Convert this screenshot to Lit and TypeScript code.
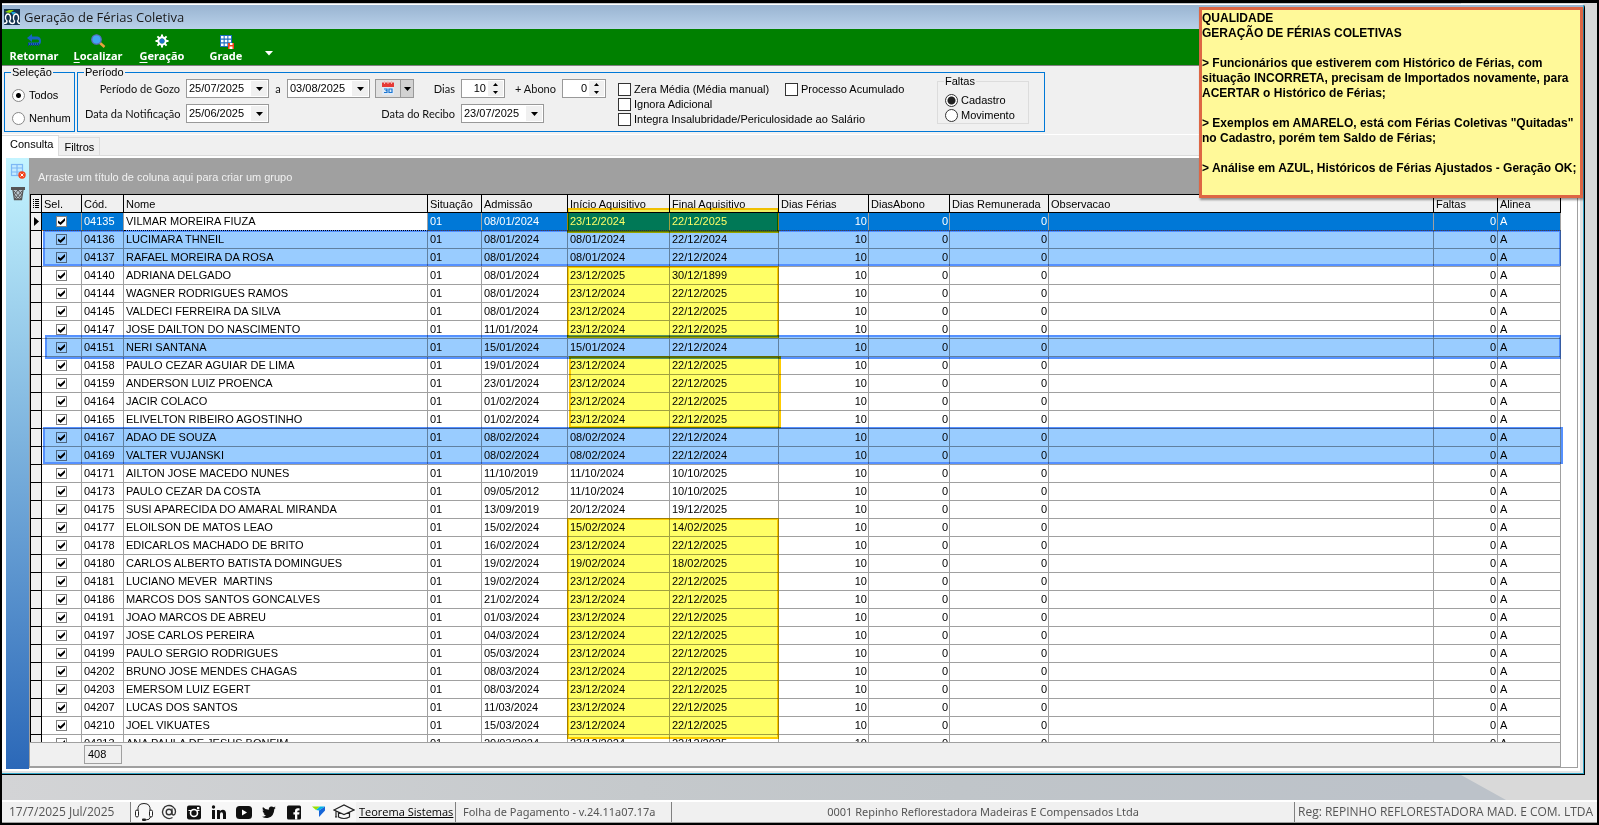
import { LitElement, html, css, svg, nothing } from "lit";
import { customElement, state } from "lit/decorators.js";
import { classMap } from "lit/directives/class-map.js";

interface Row {
  cod: string;
  nome: string;
  admissao: string;
  inicio: string;
  final: string;
}

const r = (cod: string, nome: string, admissao: string, inicio: string, final: string): Row => ({
  cod, nome, admissao, inicio, final,
});

const ROWS: Row[] = [
  r("04135", "VILMAR MOREIRA FIUZA", "08/01/2024", "23/12/2024", "22/12/2025"),
  r("04136", "LUCIMARA THNEIL", "08/01/2024", "08/01/2024", "22/12/2024"),
  r("04137", "RAFAEL MOREIRA DA ROSA", "08/01/2024", "08/01/2024", "22/12/2024"),
  r("04140", "ADRIANA DELGADO", "08/01/2024", "23/12/2025", "30/12/1899"),
  r("04144", "WAGNER RODRIGUES RAMOS", "08/01/2024", "23/12/2024", "22/12/2025"),
  r("04145", "VALDECI FERREIRA DA SILVA", "08/01/2024", "23/12/2024", "22/12/2025"),
  r("04147", "JOSE DAILTON DO NASCIMENTO", "11/01/2024", "23/12/2024", "22/12/2025"),
  r("04151", "NERI SANTANA", "15/01/2024", "15/01/2024", "22/12/2024"),
  r("04158", "PAULO CEZAR AGUIAR DE LIMA", "19/01/2024", "23/12/2024", "22/12/2025"),
  r("04159", "ANDERSON LUIZ PROENCA", "23/01/2024", "23/12/2024", "22/12/2025"),
  r("04164", "JACIR COLACO", "01/02/2024", "23/12/2024", "22/12/2025"),
  r("04165", "ELIVELTON RIBEIRO AGOSTINHO", "01/02/2024", "23/12/2024", "22/12/2025"),
  r("04167", "ADAO DE SOUZA", "08/02/2024", "08/02/2024", "22/12/2024"),
  r("04169", "VALTER VUJANSKI", "08/02/2024", "08/02/2024", "22/12/2024"),
  r("04171", "AILTON JOSE MACEDO NUNES", "11/10/2019", "11/10/2024", "10/10/2025"),
  r("04173", "PAULO CEZAR DA COSTA", "09/05/2012", "11/10/2024", "10/10/2025"),
  r("04175", "SUSI APARECIDA DO AMARAL MIRANDA", "13/09/2019", "20/12/2024", "19/12/2025"),
  r("04177", "ELOILSON DE MATOS LEAO", "15/02/2024", "15/02/2024", "14/02/2025"),
  r("04178", "EDICARLOS MACHADO DE BRITO", "16/02/2024", "23/12/2024", "22/12/2025"),
  r("04180", "CARLOS ALBERTO BATISTA DOMINGUES", "19/02/2024", "19/02/2024", "18/02/2025"),
  r("04181", "LUCIANO MEVER  MARTINS", "19/02/2024", "23/12/2024", "22/12/2025"),
  r("04186", "MARCOS DOS SANTOS GONCALVES", "21/02/2024", "23/12/2024", "22/12/2025"),
  r("04191", "JOAO MARCOS DE ABREU", "01/03/2024", "23/12/2024", "22/12/2025"),
  r("04197", "JOSE CARLOS PEREIRA", "04/03/2024", "23/12/2024", "22/12/2025"),
  r("04199", "PAULO SERGIO RODRIGUES", "05/03/2024", "23/12/2024", "22/12/2025"),
  r("04202", "BRUNO JOSE MENDES CHAGAS", "08/03/2024", "23/12/2024", "22/12/2025"),
  r("04203", "EMERSOM LUIZ EGERT", "08/03/2024", "23/12/2024", "22/12/2025"),
  r("04207", "LUCAS DOS SANTOS", "11/03/2024", "23/12/2024", "22/12/2025"),
  r("04210", "JOEL VIKUATES", "15/03/2024", "23/12/2024", "22/12/2025"),
  r("04213", "ANA PAULA DE JESUS BONFIM", "20/03/2024", "23/12/2024", "22/12/2025"),
];

const base = css`
  :host, * { box-sizing: border-box; }
  button, input { font: inherit; color: inherit; margin: 0; padding: 0; border: 0; background: none; }
  svg { display: block; }
`;

@customElement("tool-bar")
export class ToolBar extends LitElement {
  static styles = [base, css`
    :host {
      display: flex; align-items: stretch; height: 37px; flex: none;
      background: #008000; border-bottom: 1px solid #808080;
      font: bold 11px/14px "Noto Sans", sans-serif; color: #fff;
    }
    .tool { width: 64px; display: flex; flex-direction: column; align-items: center; justify-content: flex-end; padding-bottom: 2px; }
    .more { width: 22px; display: flex; align-items: center; justify-content: center; padding-top: 12px; }
    u { text-underline-offset: 2px; }
  `];

  render() {
    return html`
      <button class="tool">
        <svg width="18" height="16" viewBox="0 0 18 16" aria-hidden="true">
          <path d="M7 1 2 5l5 4V6.500h5.500q1.500 0 1.500 1.500t-1.500 1.500H3V12h9.500Q16 12 16 8t-3.500-4.500H7z" fill="#1565c0"/>
          <path d="M3.500 10v3M5.500 10v3M7.500 10v3M9.500 10v3M11.500 10v3M13.500 10v3" stroke="#0d3f8a" stroke-width="1"/>
        </svg>
        <span>Retornar</span>
      </button>
      <button class="tool">
        <svg width="16" height="16" viewBox="0 0 16 16" aria-hidden="true">
          <path d="M9.500 9.500l5 4.500" stroke="#e8a33d" stroke-width="2.500"/>
          <circle cx="6.500" cy="6.500" r="4.700" fill="#42a5f5" stroke="#5c6bc0" stroke-width="1.300"/>
        </svg>
        <span><u>L</u>ocalizar</span>
      </button>
      <button class="tool">
        <svg width="16" height="16" viewBox="0 0 16 16" aria-hidden="true">
          <circle cx="8" cy="8" r="3.600" fill="none" stroke="#fff" stroke-width="2.200"/>
          <path d="M8 1.500v3M8 11.500v3M1.500 8h3M11.500 8h3M3.400 3.400l2 2M10.600 10.600l2 2M12.600 3.400l-2 2M5.400 10.600l-2 2" stroke="#fff" stroke-width="2"/>
          <circle cx="8" cy="8" r="2.500" fill="#1e74c8"/>
        </svg>
        <span><u>G</u>eração</span>
      </button>
      <button class="tool">
        <svg width="16" height="16" viewBox="0 0 16 16" aria-hidden="true">
          <rect x="2" y="2" width="12" height="12" fill="#1e6fc0"/>
          <path d="M3 3h2.600v2.600H3zM6.700 3h2.600v2.600H6.700zM10.400 3H13v2.600h-2.600zM3 6.700h2.600v2.600H3zM6.700 6.700h2.600v2.600H6.700zM10.400 6.700H13v2.600h-2.600zM3 10.400h2.600V13H3zM6.700 10.400h2.600V13H6.700z" fill="#fff"/>
          <path d="M10 10h6v6h-6z" fill="#f4431c"/><path d="M12 10h2.500v2H12zM11.500 13.500h3V16h-3z" fill="#fff"/>
        </svg>
        <span>Grade</span>
      </button>
      <button class="more" aria-label="Mais opções">
        <svg width="8" height="5" viewBox="0 0 8 5"><path d="M0 0h8L4 4.500z" fill="#fff"/></svg>
      </button>
    `;
  }
}

@customElement("filter-panel")
export class FilterPanel extends LitElement {
  static styles = [base, css`
    :host { display: flex; align-items: stretch; gap: 2px; padding: 0 2px 2px; font: 11px/13px "Liberation Sans", Arial, sans-serif; color: #000; flex: none; }
    fieldset { margin: 0; padding: 0; border: 1px solid #0078d7; min-width: 0; }
    legend { margin-left: 6px; padding: 0 1px; }
    .sel { width: 71px; }
    .sel .opts { display: flex; flex-direction: column; gap: 9px; padding: 9px 0 0 7px; }
    .opt { display: flex; align-items: center; gap: 3px; white-space: nowrap; }
    .sel .opt { gap: 4px; height: 14px; }
    input[type="radio"] { appearance: none; width: 13px; height: 13px; border-radius: 50%; border: 1px solid #333; background: #fff; flex: none; }
    input[type="radio"]:checked { background: radial-gradient(circle, #222 0 3.500px, #fff 4.500px); }
    .sel input[type="radio"] { border-color: #888; }
    .sel input[type="radio"]:checked { background: radial-gradient(circle, #000 0 2px, #fff 3px); }
    input[type="checkbox"] { appearance: none; width: 13px; height: 13px; border: 1px solid #333; background: #fff; flex: none; }
    input[type="checkbox"]:checked { background: #333; }
    .per .body { display: flex; align-items: flex-start; padding: 0 15px 5px 7px; }
    .form { display: grid; grid-template-columns: 101px 83px 18px 83px 5px 39px 47px 44px 57px 44px; grid-template-rows: 19px 19px; row-gap: 6px; }
    .lbl { font: 11px/19px Lato, sans-serif; text-align: right; padding-right: 6px; color: #111; white-space: nowrap; }
    .mid { text-align: center; padding: 0; }
    .box { display: flex; background: #fff; border: 1px solid #999; height: 19px; }
    .box input { flex: 1; width: 0; min-width: 0; padding-left: 2px; }
    .num input { text-align: right; padding-right: 2px; }
    .drop { width: 16px; margin: 1px; background: #f0f0f0; display: grid; place-items: center; }
    .spin { width: 15px; display: flex; flex-direction: column; margin: 1px 1px 1px 0; }
    .spin button { flex: 1; display: grid; place-items: center; background: #f0f0f0; }
    .wide { grid-column: 8 / span 2; width: 83px; }
    .rec { grid-column: 4 / span 4; }
    .cal { display: flex; border: 1px solid #999; background: #e1e1e1; height: 19px; }
    .cal button:first-child { width: 25px; display: grid; place-items: center; border-right: 1px solid #999; }
    .cal button:last-child { flex: 1; display: grid; place-items: center; background: #d2d2d2; }
    .checks { display: grid; grid-template-columns: 167px 120px; row-gap: 1px; margin: 3px 0 0 12px; align-content: start; }
    .checks .opt { height: 14px; }
    .c1 { grid-column: 1; }
    .span { grid-column: 1 / span 2; }
    .fal { border-color: #dcdcdc; margin-left: 32px; width: 92px; height: 49px; margin-top: -4px; }
    .fal .opts { display: flex; flex-direction: column; gap: 1px; padding: 5px 0 0 7px; }
    .fal .opt { height: 14px; }
  `];

  @state() private selecao = "Todos";

  private caret = () => svg`<svg width="7" height="4" viewBox="0 0 7 4"><path d="M0 0h7L3.500 4z" fill="#000"/></svg>`;
  private up = () => svg`<svg width="5" height="3" viewBox="0 0 5 3"><path d="M0 3h5L2.500 0z" fill="#000"/></svg>`;
  private down = () => svg`<svg width="5" height="3" viewBox="0 0 5 3"><path d="M0 0h5L2.500 3z" fill="#000"/></svg>`;

  private date(id: string, value: string, label: string, wide = false) {
    return html`<div class=${classMap({ box: true, wide })}>
      <input id=${id} type="text" .value=${value} aria-label=${label}>
      <button class="drop" aria-label="Abrir calendário">${this.caret()}</button>
    </div>`;
  }

  private num(id: string, value: string) {
    return html`<div class="box num">
      <input id=${id} type="text" inputmode="numeric" .value=${value}>
      <div class="spin">
        <button aria-label="Aumentar">${this.up()}</button>
        <button aria-label="Diminuir">${this.down()}</button>
      </div>
    </div>`;
  }

  render() {
    return html`
      <fieldset class="sel">
        <legend>Seleção</legend>
        <div class="opts">
          ${["Todos", "Nenhum"].map((o) => html`<label class="opt">
            <input type="radio" name="sel" .checked=${this.selecao === o} @change=${() => (this.selecao = o)}>${o}</label>`)}
        </div>
      </fieldset>
      <fieldset class="per">
        <legend>Período</legend>
        <div class="body">
          <div class="form">
            <label class="lbl" for="gozo">Período de Gozo</label>
            ${this.date("gozo", "25/07/2025", "Início do período de gozo")}
            <label class="lbl mid" for="gozofim">a</label>
            ${this.date("gozofim", "03/08/2025", "Fim do período de gozo")}
            <span></span>
            <div class="cal">
              <button aria-label="Calendário">
                <svg width="14" height="15" viewBox="0 0 14 15">
                  <rect x="1" y="1" width="12" height="13" fill="#dfe9f5"/>
                  <path d="M1 1.500h12V6H1z" fill="#e53935"/>
                  <path d="M3.500 0v3M7 0v3M10.500 0v3" stroke="#f7b5b0" stroke-width="1"/>
                  <path d="M3 8h3v1.500H4.500M6 9.500v2H3M8 8h3v3.500H8z" fill="none" stroke="#1976d2" stroke-width="1.200"/>
                </svg>
              </button>
              <button aria-label="Opções do calendário">${this.caret()}</button>
            </div>
            <label class="lbl" for="dias">Dias</label>
            ${this.num("dias", "10")}
            <label class="lbl" for="abono">+ Abono</label>
            ${this.num("abono", "0")}
            <label class="lbl" for="notif">Data da Notificação</label>
            ${this.date("notif", "25/06/2025", "Data da Notificação")}
            <span></span>
            <label class="lbl rec" for="recibo">Data do Recibo</label>
            ${this.date("recibo", "23/07/2025", "Data do Recibo", true)}
          </div>
          <div class="checks">
            <label class="opt"><input type="checkbox">Zera Média (Média manual)</label>
            <label class="opt"><input type="checkbox">Processo Acumulado</label>
            <label class="opt c1"><input type="checkbox">Ignora Adicional</label>
            <label class="opt span"><input type="checkbox">Integra Insalubridade/Periculosidade ao Salário</label>
          </div>
          <fieldset class="fal">
            <legend>Faltas</legend>
            <div class="opts">
              <label class="opt"><input type="radio" name="fal" checked>Cadastro</label>
              <label class="opt"><input type="radio" name="fal">Movimento</label>
            </div>
          </fieldset>
        </div>
      </fieldset>
    `;
  }
}

@customElement("vacation-grid")
export class VacationGrid extends LitElement {
  static styles = [base, css`
    :host { display: flex; flex: 1; min-width: 0; min-height: 0; flex-direction: column; position: relative;
      font: 11px/17px "Liberation Sans", Arial, sans-serif; color: #000; }
    .group { height: 36px; flex: none; background: #a0a0a0; color: #f0f0f0; padding: 11px 0 0 9px; }
    .area { flex: 1; min-height: 0; display: flex; flex-direction: column; position: relative; background: #fff;
      border: 1px solid #a0a0a0; border-top: 0; margin-bottom: 1px; padding-right: 16px; }
    .view { flex: 1; min-height: 0; overflow: hidden; }
    table { width: 100%; table-layout: fixed; border-collapse: separate; border-spacing: 0; border-left: 1px solid #000; }
    th, td { height: 18px; padding: 0 2px; white-space: nowrap; overflow: hidden; text-align: left; font-weight: normal;
      border-right: 1px solid #a0a0a0; border-bottom: 1px solid #a0a0a0; }
    th { height: 19px; background: #f0f0f0; border-color: #000; border-top: 1px solid #000; line-height: 16px; }
    th.ind { padding: 0 0 0 1px; }
    td.ind { background: #f0f0f0; border-color: #000; padding: 0; }
    td.name { white-space: pre; }
    td.n { text-align: right; padding-right: 1px; }
    td.c { padding: 0 0 0 14px; }
    .c1 { width: 11px; } .c2 { width: 40px; } .c3 { width: 42px; } .c4 { width: 304px; } .c5 { width: 54px; }
    .c6 { width: 86px; } .c7 { width: 102px; } .c8 { width: 109px; } .c9 { width: 90px; } .c10 { width: 81px; }
    .c11 { width: 99px; } .c13 { width: 64px; } .c14 { width: 63px; }
    tr.cur td:not(.ind) { background: #0078d7; color: #fff; border-bottom: 1px dotted #e08a3c; }
    tr.cur td.name { background: #fff; color: #000; border-bottom: 1px dotted #000; }
    input { appearance: none; display: block; width: 11px; height: 11px; border: 1px solid #808080; background: #fff; position: relative; }
    input:checked::before { content: ""; position: absolute; inset: 1px; background: #000;
      clip-path: polygon(0 35%, 35% 62%, 100% 0, 100% 38%, 38% 100%, 0 72%); }
    .foot { height: 25px; flex: none; background: #f0f0f0; border-top: 1px solid #a0a0a0; border-bottom: 1px solid #a0a0a0; border-right: 1px solid #a0a0a0; padding: 2px 0 0 54px; }
    .count { width: 38px; height: 19px; border: 1px solid #a0a0a0; padding-left: 3px; }
    .mark { position: absolute; mix-blend-mode: multiply; pointer-events: none; }
    .blue { background: #99ccff; border: 2px solid #5591ff; right: 16px; }
    .yellow { background: #ffff66; border: 2px solid #ffcc00; left: 537px; width: 212px; }
    .b1 { left: 13px; top: 36px; height: 36px; }
    .b2 { left: 15px; top: 141px; height: 24px; }
    .b3 { left: 13px; top: 233px; height: 37px; right: 14px; }
    .y1 { top: 14px; height: 25px; }
    .y2 { top: 72px; height: 72px; }
    .y3 { top: 162px; height: 72px; left: 539px; }
    .y4 { top: 324px; height: 221px; }
  `];

  @state() private current = 0;

  render() {
    const heads = ["Sel.", "Cód.", "Nome", "Situação", "Admissão", "Início Aquisitivo", "Final Aquisitivo",
      "Dias Férias", "DiasAbono", "Dias Remunerada", "Observacao", "Faltas", "Alinea"];
    return html`
      <div class="group">Arraste um título de coluna aqui para criar um grupo</div>
      <div class="area">
        <div class="view">
          <table>
            <colgroup>${Array.from({ length: 14 }, (_, i) => html`<col class="c${i + 1}">`)}</colgroup>
            <thead><tr>
              <th class="ind" aria-label="Indicador">
                <svg width="8" height="11" viewBox="0 0 8 11"><path d="M1 1.500h1M3 1.500h4M1 3.500h1M3 3.500h4M1 5.500h1M3 5.500h4M1 7.500h1M3 7.500h4M1 9.500h1M3 9.500h4" stroke="#000"/></svg>
              </th>
              ${heads.map((h) => html`<th>${h}</th>`)}
            </tr></thead>
            <tbody>
              ${ROWS.map((row, i) => html`
                <tr class=${classMap({ cur: i === this.current })} @click=${() => (this.current = i)}>
                  <td class="ind">${i === this.current
                    ? html`<svg width="9" height="9" viewBox="0 0 9 9"><path d="M3 0v9l5-4.500z"/></svg>` : nothing}</td>
                  <td class="c"><input type="checkbox" checked aria-label="Selecionar ${row.nome}"></td>
                  <td>${row.cod}</td><td class="name">${row.nome}</td><td>01</td>
                  <td>${row.admissao}</td><td>${row.inicio}</td><td>${row.final}</td>
                  <td class="n">10</td><td class="n">0</td><td class="n">0</td><td></td><td class="n">0</td><td>A</td>
                </tr>`)}
            </tbody>
          </table>
        </div>
        <div class="foot"><div class="count">408</div></div>
        <div class="mark blue b1"></div>
        <div class="mark blue b2"></div>
        <div class="mark blue b3"></div>
        <div class="mark yellow y1"></div>
        <div class="mark yellow y2"></div>
        <div class="mark yellow y3"></div>
        <div class="mark yellow y4"></div>
      </div>
    `;
  }
}

@customElement("status-bar")
export class StatusBar extends LitElement {
  static styles = [base, css`
    :host { display: flex; align-items: stretch; height: 23px; flex: none; background: #f0f0f0; border-top: 2px solid #fff;
      border-bottom: 1px solid #a0a0a0; font: 11px/20px "Noto Sans", sans-serif; color: #555; white-space: nowrap; overflow: hidden; }
    .cell { border-right: 1px solid #808080; padding-left: 7px; }
    .date { width: 129px; font: 12px/20px "Open Sans", sans-serif; }
    .icons { display: flex; align-items: center; width: 225px; background: #f7f7f7; }
    .icons a { width: 25px; display: grid; place-items: center; }
    .link { width: 100px; padding-left: 3px; }
    .link a { color: #000; font-family: "Open Sans", sans-serif; }
    .app { width: 216px; }
    .firm { flex: 1; text-align: center; padding: 0; min-width: 0; }
    .reg { width: 302px; border: 0; padding-left: 3px; font: 12px/20px "Open Sans", sans-serif; }
  `];

  render() {
    const icon = (label: string, body: unknown) => html`<a href="#" aria-label=${label}>
      <svg width="22" height="20" viewBox="0 0 22 20">${body}</svg></a>`;
    return html`
      <div class="cell date">17/7/2025 Jul/2025</div>
      <nav class="icons">
        ${icon("Suporte", svg`<path d="M5 9Q4 1.500 11 1.500T17 9" fill="none" stroke="#222" stroke-width="1"/><rect x="2.500" y="8" width="3" height="7" rx="1.500" fill="#fff" stroke="#222"/><rect x="16.500" y="8" width="3" height="7" rx="1.500" fill="#fff" stroke="#222"/><path d="M17.500 15q-.500 3-5 3" fill="none" stroke="#222"/><rect x="9" y="16.500" width="4" height="2.500" rx="1" fill="#222"/>`)}
        ${icon("E-mail", svg`<circle cx="11" cy="10" r="2.800" fill="none" stroke="#333" stroke-width="1.400"/><path d="M14 6.500V11q0 2 1.600 2T17.500 9.500A6.500 6.500 0 1 0 14.500 15.500" fill="none" stroke="#333" stroke-width="1.300"/>`)}
        ${icon("Instagram", svg`<rect x="4" y="3.500" width="14" height="14" rx="2" fill="#111"/><circle cx="11" cy="11" r="3.500" fill="none" stroke="#fff" stroke-width="1.600"/><path d="M5.500 8.500h3M13.500 8.500h3" stroke="#fff"/><rect x="14" y="5" width="2.300" height="2.300" fill="#fff"/>`)}
        ${icon("LinkedIn", svg`<path d="M4 8h3v9H4zM9 8h2.800v1.300Q12.700 7.700 14.700 7.700 18 7.700 18 11.500V17h-3v-4.800q0-2-1.500-2T12 12.200V17H9z" fill="#111"/><circle cx="5.500" cy="5" r="1.700" fill="#111"/>`)}
        ${icon("YouTube", svg`<rect x="3" y="4" width="16" height="13" rx="3.500" fill="#111"/><path d="M9 7.500v6l5-3z" fill="#fff"/>`)}
        ${icon("Twitter", svg`<path d="M17.800 5.800l-1.600.500q1-.7 1.200-1.700l-1.800.7q-1-1-2.200-.9-2.900.3-2.600 3.300Q7 7.500 4.900 4.900q-1.200 2.300.800 3.900l-1.200-.3q.100 2 2.200 2.900l-1.200.100q.6 1.600 2.500 2-1.800 1.300-4 1.200 3 1.900 6.500 1.100 5.500-1.500 5.800-8.500z" fill="#111"/>`)}
        ${icon("Facebook", svg`<rect x="4" y="3.500" width="14" height="14" rx="1.500" fill="#111"/><path d="M12 17.500v-5h-1.600v-2.200H12V9q0-2.800 2.800-2.800h1.700v2.200h-1.200q-1 0-1 1v.900h2.200l-.3 2.200h-1.900v5z" fill="#fff"/>`)}
        ${icon("Teorema", svg`<path d="M4 4.500h8L8 8z" fill="#9be000"/><path d="M12 4.500h5l-6 4-3-.500z" fill="#00b4e6"/><path d="M17 4.500v4l-6 6.500V8.500z" fill="#1565d8"/>`)}
        ${icon("Treinamento", svg`<path d="M1 8l10-5 10 5-10 4.500zM5.500 10v5q5.500 3 11 0v-5M3 9v6M2 15h2.200" fill="none" stroke="#222" stroke-width="1.200"/>`)}
      </nav>
      <div class="cell link"><a href="#">Teorema Sistemas</a></div>
      <div class="cell app">Folha de Pagamento - v.24.11a07.17a</div>
      <div class="cell firm">0001 Repinho Reflorestadora Madeiras E Compensados Ltda</div>
      <div class="cell reg">Reg: REPINHO REFLORESTADORA MAD. E COM. LTDA</div>
    `;
  }
}

@customElement("app-root")
export class AppRoot extends LitElement {
  static styles = [base, css`
    :host { display: flex; flex-direction: column; height: 100vh; border: 2px solid #000; border-top-width: 3px; overflow: hidden; }
    .desk { flex: 1; min-height: 0; display: flex; padding: 1px 12px 25px 0; position: relative;
      background: linear-gradient(90deg, #d3d4d6, #c5c9cc 40%, #c0c5c9 60%, #bcc2c9 90%); }
    .desk::before { content: ""; position: absolute; right: 0; bottom: 0; width: 136px; height: 100%;
      background: #d9d9d9; clip-path: polygon(0 0, 100% 0, 100% 100%, 45px 100%, 0 calc(100% - 25px)); }
    .win { flex: 1; min-width: 0; display: flex; flex-direction: column; position: relative; background: #f0f0f0;
      border-top: 1px solid #fff; border-right: 1px solid #000; border-bottom: 1px solid #000; border-radius: 0 4px 0 0; }
    .title { height: 24px; flex: none; display: flex; align-items: center; gap: 4px; padding-left: 2px;
      background: linear-gradient(#99b4d1, #b9d1ea); font: 13px/24px "Open Sans", sans-serif; color: #1a1a1a; }
    .tabs { display: flex; align-items: flex-end; height: 22px; flex: none; border-top: 1px solid #fff;
      font: 11px/13px "Liberation Sans", Arial, sans-serif; }
    .tabs button { border: 1px solid #dcdcdc; border-left: 0; height: 19px; padding: 1px 5px 0; }
    .tabs button.on { background: #fff; height: 21px; border-bottom: 0; padding: 0 5px 4px 8px; }
    .rest { flex: 1; border-bottom: 1px solid #dcdcdc; }
    .page { flex: 1; min-height: 0; display: flex; background: #fff; padding: 2px 2px 2px 4px;
      border-right: 3px solid #e4e4e4; border-bottom: 2px solid #e4e4e4; }
    .edge { flex: 1; min-height: 0; display: flex; flex-direction: column; border-right: 1px solid #33a6c8; border-bottom: 1px solid #33a6c8; }
    .side { width: 23px; flex: none; background: linear-gradient(#c4f4ff, #2b68b8); display: flex; flex-direction: column; align-items: center; gap: 7px; padding-top: 5px; }
    .note { position: absolute; right: 1px; top: 2px; width: 384px; height: 191px; margin: 0; padding-top: 1px; border: 3px solid #dd6644;
      background: #fff999; box-shadow: 1px 2px 2px #0006; color: #000; white-space: pre-line;
      font: bold 12px/15px "Liberation Sans", Arial, sans-serif; }
  `];

  @state() private tab = "Consulta";

  render() {
    return html`
      <div class="desk">
        <main class="win">
          <div class="edge">
            <header class="title">
              <svg width="16" height="16" viewBox="0 0 16 16" aria-hidden="true">
                <rect width="16" height="16" fill="#14324f"/>
                <path d="M1 3l4-2h5L6 4z" fill="#8bd400"/><path d="M7 3h5l-3 3z" fill="#1ba7e0"/>
                <path d="M0 14.500q3 0 3-2.500-2-1.500-1.500-4Q2 5 4 5t2.500 3Q7 10.500 5.500 12q.5 2.500 3 2.500 2 0 2-2.500Q9 10.500 9.500 8 10 5 12 5t2.500 3q.5 2.500-1 4 .5 2.500 2.500 2.500" fill="none" stroke="#fff" stroke-width="1.400"/>
              </svg>
              <span>Geração de Férias Coletiva</span>
            </header>
            <tool-bar></tool-bar>
            <filter-panel></filter-panel>
            <div class="tabs" role="tablist">
              ${["Consulta", "Filtros"].map((t) => html`<button role="tab" aria-selected=${this.tab === t}
                class=${classMap({ on: this.tab === t })} @click=${() => (this.tab = t)}>${t}</button>`)}
              <span class="rest"></span>
            </div>
            <div class="page">
              <div class="side">
                <button aria-label="Limpar grade">
                  <svg width="16" height="16" viewBox="0 0 16 16">
                    <rect x="1.500" y="1.500" width="11" height="11" fill="#c4ecff" stroke="#7db8f5" stroke-width="1.200"/>
                    <path d="M7 1v12M1 5h12M1 9h12" stroke="#7db8f5" stroke-width="1.200"/>
                    <circle cx="12" cy="12" r="3.700" fill="#f4431c"/><path d="M10.500 10.500l3 3M13.500 10.500l-3 3" stroke="#fff"/>
                  </svg>
                </button>
                <button aria-label="Excluir">
                  <svg width="16" height="15" viewBox="0 0 16 15">
                    <path d="M1 1h14v3H1z" fill="#555"/><path d="M3 4l1.500 9.500h7L13 4" fill="#b9c4cc" stroke="#555" stroke-width="1.300"/>
                    <path d="M4 5l7 8M12 5l-7 8M8 4l-4 5M8 4l4 5M4.500 9L8 13.500 11.500 9" stroke="#555" fill="none"/>
                  </svg>
                </button>
              </div>
              <vacation-grid></vacation-grid>
            </div>
          </div>
          <p class="note">QUALIDADE
GERAÇÃO DE FÉRIAS COLETIVAS

&gt; Funcionários que estiverem com Histórico de Férias, com
situação INCORRETA, precisam de Importados novamente, para
ACERTAR o Histórico de Férias;

&gt; Exemplos em AMARELO, está com Férias Coletivas "Quitadas"
no Cadastro, porém tem Saldo de Férias;

&gt; Análise em AZUL, Históricos de Férias Ajustados - Geração OK;</p>
        </main>
      </div>
      <status-bar></status-bar>
    `;
  }
}
